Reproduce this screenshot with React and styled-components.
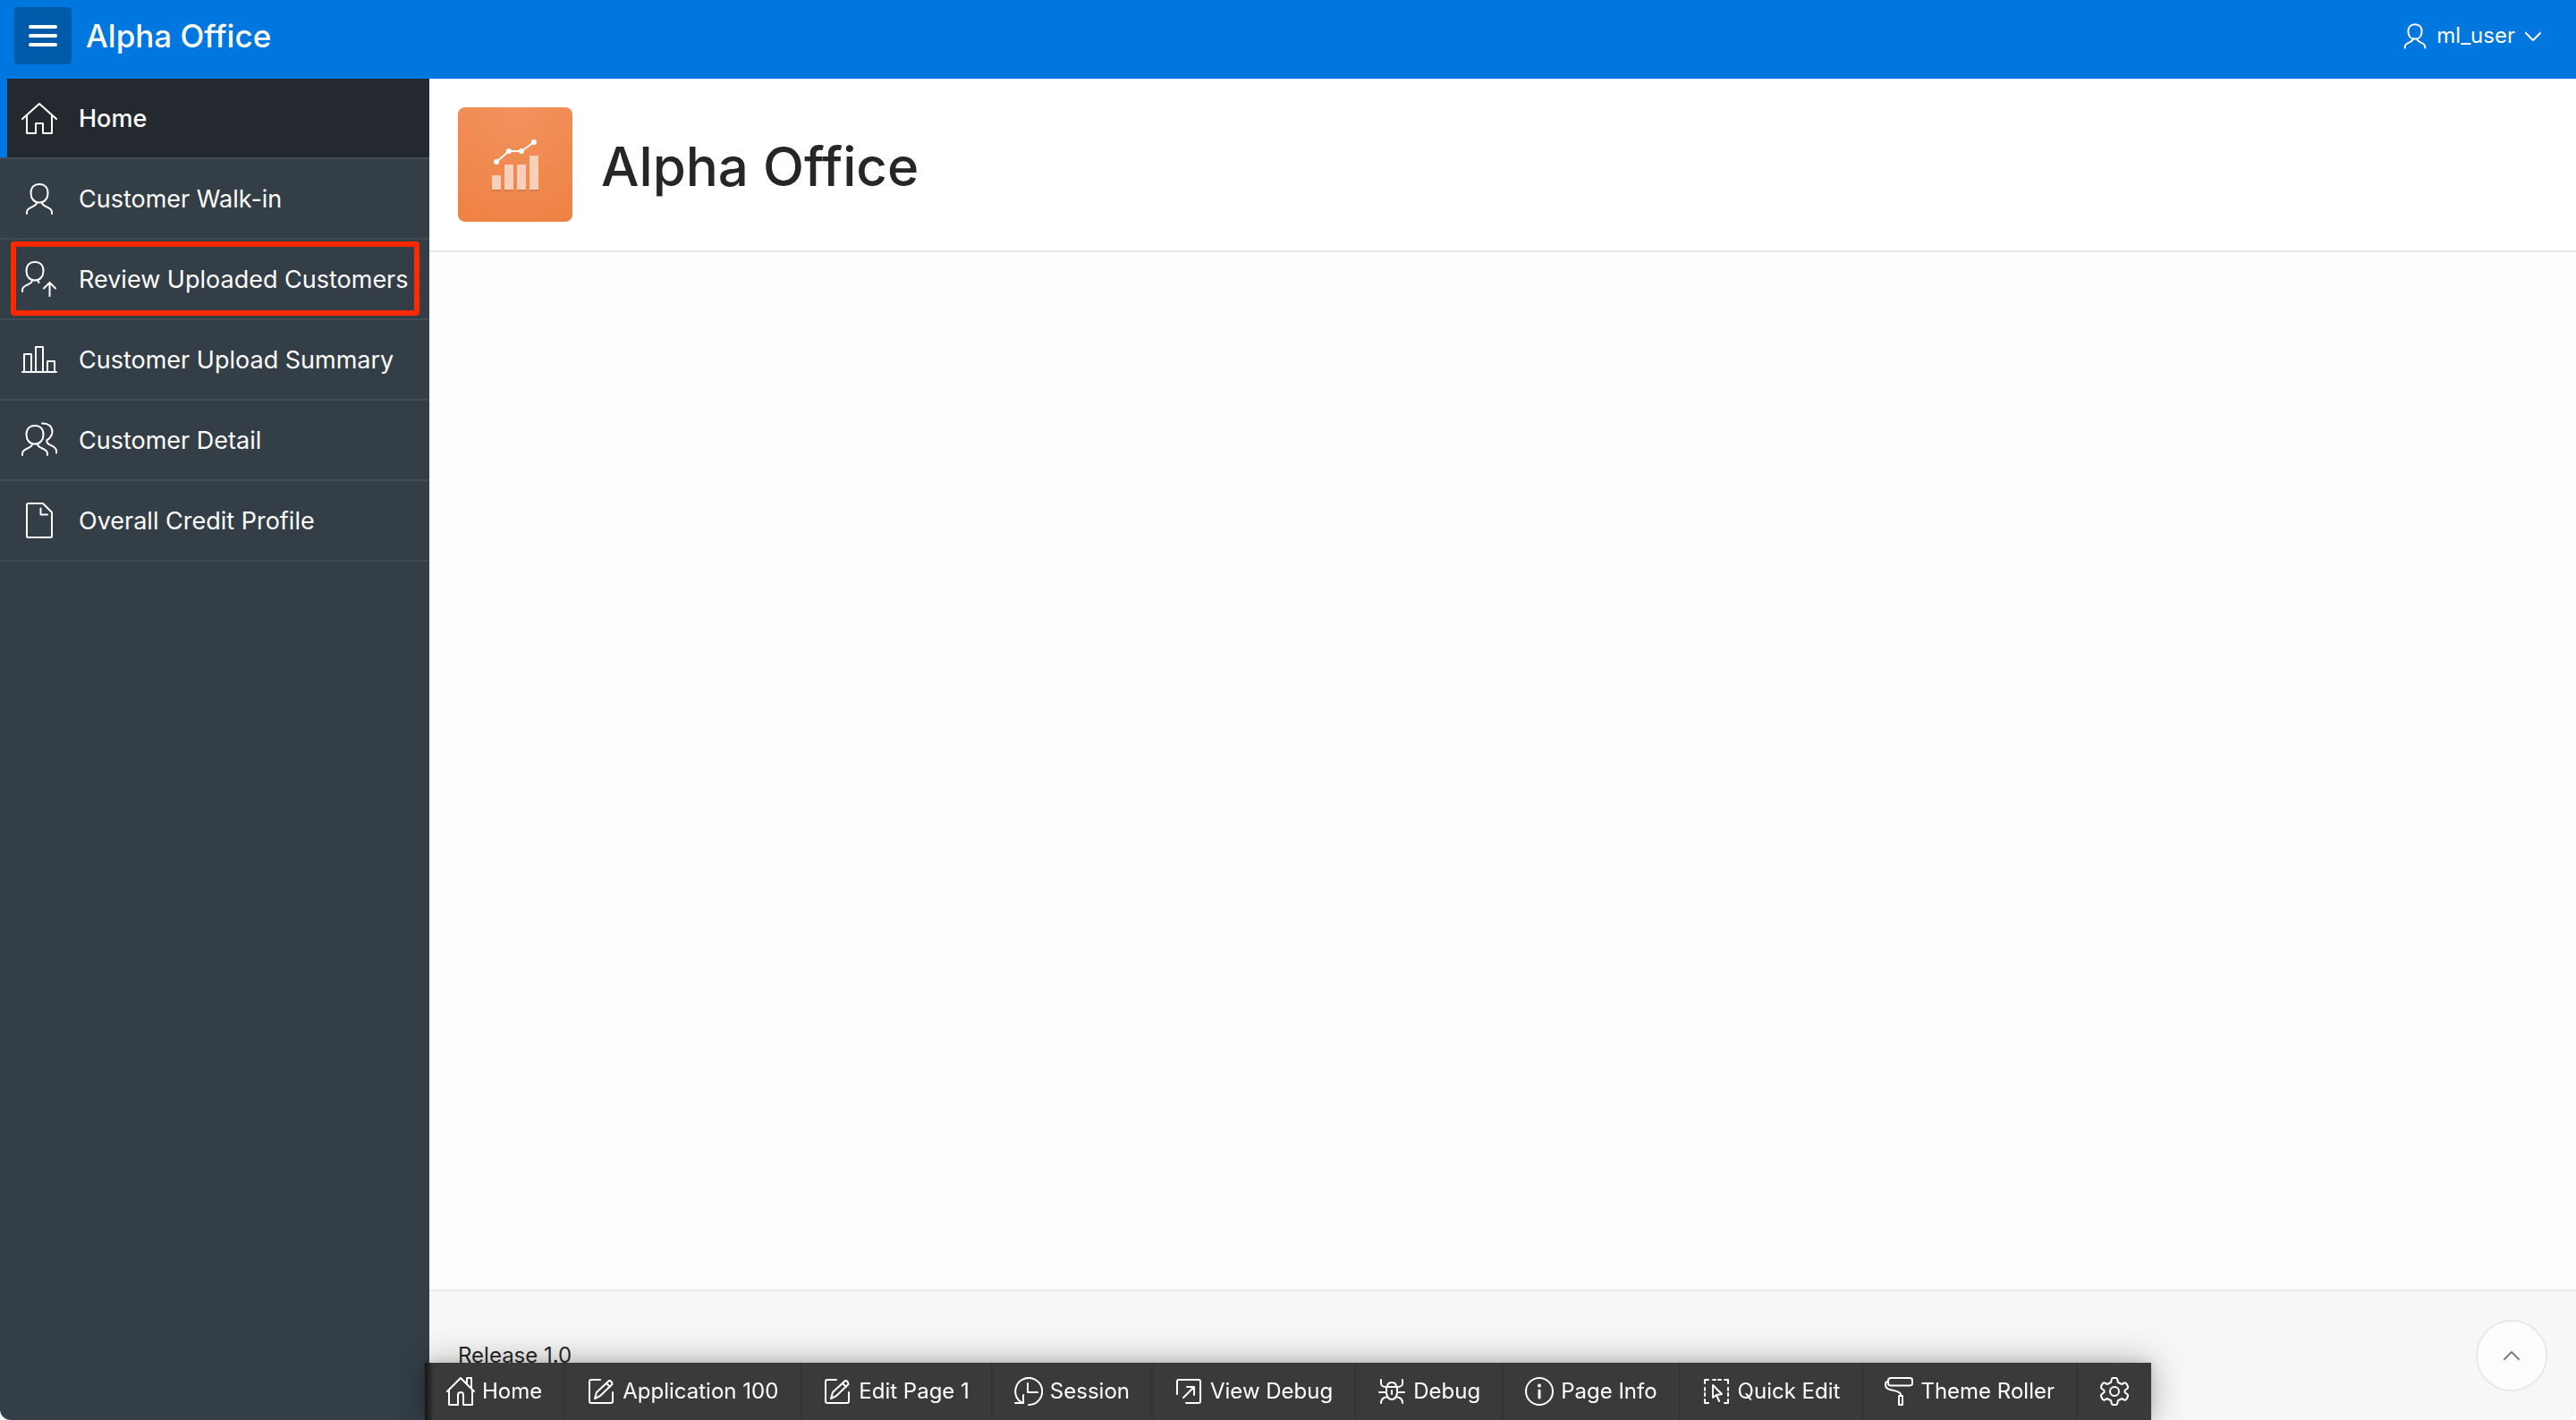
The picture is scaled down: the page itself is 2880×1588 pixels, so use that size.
import React from "react";
import styled, { createGlobalStyle, css } from "styled-components";

const GlobalStyle = createGlobalStyle`
  *, *::before, *::after { box-sizing: border-box; }
  body {
    margin: 0;
    background: #ffffff;
    color: #262626;
    font-family: Inter, "Liberation Sans", sans-serif;
    font-size: 28px;
    -webkit-font-smoothing: antialiased;
  }
`;

const Page = styled.div`
  min-height: 100vh;
  display: flex;
  flex-direction: column;
  border-radius: 0 0 12px 12px;
  overflow: hidden;
`;

const Header = styled.header`
  display: flex;
  align-items: center;
  height: 88px;
  padding: 0 32px 8px 16px;
  background: #0076df;
  color: #ffffff;
`;

const MenuToggle = styled.button`
  display: grid;
  place-items: center;
  width: 64px;
  height: 64px;
  padding: 0;
  border: 0;
  border-radius: 4px;
  background: #0059a9;
  color: inherit;
`;

const Brand = styled.a`
  margin-left: 16px;
  font-size: 35px;
  line-height: 48px;
  font-weight: 500;
  color: inherit;
  text-decoration: none;
`;

const UserMenu = styled.button`
  display: flex;
  align-items: center;
  gap: 8px;
  margin-left: auto;
  padding: 0;
  border: 0;
  background: none;
  color: inherit;
  font: inherit;
  font-size: 24px;
  line-height: 32px;
`;

const Body = styled.div`
  flex: 1;
  display: flex;
`;

const Sidebar = styled.nav`
  flex: none;
  width: 480px;
  background: #343e47;
`;

const NavList = styled.ul`
  margin: 0;
  padding: 0;
  list-style: none;
`;

const NavItem = styled.li`
  position: relative;
  border-bottom: 2px solid #414b54;
`;

const NavLink = styled.a`
  display: flex;
  align-items: center;
  gap: 24px;
  height: 88px;
  padding-left: 24px;
  color: #ffffff;
  font-size: 27px;
  line-height: 40px;
  white-space: nowrap;
  text-decoration: none;
  ${(p) =>
    p.$active &&
    css`
      padding-left: 16px;
      border-left: 8px solid #0076df;
      background: #23292f;
      font-weight: 500;
    `}
`;

const NavLabel = styled.span`
  padding-top: 2px;
`;

const Highlight = styled.span`
  position: absolute;
  inset: 2px 11px 3px 12px;
  border: 6px solid #ff2800;
  border-radius: 4px;
  pointer-events: none;
`;

const Main = styled.main`
  flex: 1;
  display: flex;
  flex-direction: column;
  background: #fdfdfd;
`;

const Hero = styled.section`
  display: flex;
  align-items: center;
  gap: 32px;
  padding: 32px;
  border-bottom: 2px solid #e6e6e6;
  background: #ffffff;
`;

const AppIcon = styled.div`
  display: grid;
  width: 128px;
  height: 128px;
  border-radius: 8px;
  background: radial-gradient(circle at 50% 0, #f2935f 0, #ee8143 100%);
`;

const Title = styled.h1`
  margin: 0;
  padding-top: 4px;
  font-size: 60px;
  line-height: 80px;
  font-weight: 500;
`;

const Footer = styled.footer`
  display: flex;
  align-items: center;
  justify-content: space-between;
  height: 146px;
  margin-top: auto;
  padding: 0 32px;
  border-top: 2px solid #e9e9e9;
  background: #f7f7f7;
  font-size: 24px;
  line-height: 32px;
`;

const TopButton = styled.button`
  display: grid;
  place-items: center;
  width: 80px;
  height: 80px;
  padding: 0;
  border: 2px solid #e9e9e9;
  border-radius: 50%;
  background: #fdfdfd;
  color: #7c7c7f;
`;

const Toolbar = styled.div`
  position: fixed;
  bottom: 0;
  left: 50%;
  transform: translateX(-50%);
  display: flex;
  height: 64px;
  background: linear-gradient(to right, #141414 0, #3a3a3a 10px);
  box-shadow: 0 0 40px rgba(0, 0, 0, 0.3), 0 0 12px rgba(0, 0, 0, 0.15);
`;

const Tool = styled.button`
  display: flex;
  align-items: center;
  gap: 8px;
  padding: 0 24px;
  border: 0;
  border-right: 2px solid #333333;
  background: none;
  color: #ffffff;
  font: inherit;
  font-size: 24px;
  line-height: 32px;
  white-space: nowrap;
  &:last-child {
    padding: 0 25px;
    border-right: 0;
  }
`;

const Svg = styled.svg`
  flex: none;
  display: block;
  fill: none;
  stroke: currentColor;
  stroke-width: ${(p) => p.$stroke || 2};
  stroke-linecap: round;
  stroke-linejoin: round;
`;

const icons = {
  home: <path d="M1 21 20 4 39 21M6 17V37H16V26H24V37H34V17" />,
  user: <path d="M20 4C26 4 29.500 8 29.500 14S26 24.500 20 24.500 10.500 20 10.500 14 14 4 20 4ZM17 24.500C17 30 6 29 6 35V37M23 24.500C23 30 34 29 34 35V37" />,
  userUp: <path d="M15 1C21 1 24.500 5 24.500 11S21 21.500 15 21.500 5.500 17 5.500 11 9 1 15 1ZM12 21.500C12 27 1 26 1 32V34M18 21.500 19.500 24M31.500 39V24M25 30.500 31.500 24 38 30.500" />,
  bars: <path d="M1 34H39M3 34V14H11V34M16 34V6H24V34M29 34V22H37V34" />,
  users: <path d="M15 4C21 4 24.500 8 24.500 14S21 24.500 15 24.500 5.500 20 5.500 14 9 4 15 4ZM12 24.500C12 30 1 29 1 35V37M18 24.500C18 30 29 29 29 35V37M23 1.500C30 1 34.500 5 34.500 11 34.500 15 31 19 28.500 20C26 26 39 26 39 32V34.500" />,
  file: <path d="M6 2.500Q6 1 7.500 1H24L34 11V37.500Q34 39 32.500 39H7.500Q6 39 6 37.500ZM21.500 6.500V13.500H29" />,
};

const toolIcons = {
  home: <path d="M1 16 16 1 31 16M3 14V31H13V20Q13 17 16 17T19 20V31H29V14M23 7V1H28V12" />,
  edit: <path d="M15 3H5Q3 3 3 5V27Q3 29 5 29H27Q29 29 29 27V17M9 24 11 17 25 4Q28 4 28.500 8L15 21ZM22 7 26 11" />,
  session: <path d="M16 31A15 15 0 1 0 5 26L9 29M10 20V29H1M15 7V17H26" />,
  view: <path d="M3 19V5Q3 3 5 3H27Q29 3 29 5V27Q29 29 27 29H13M10 23 22 11M14 11H22V20" />,
  debug: <path d="M10 11H22V18Q21 25 16 25T10 18ZM11 11Q11 6 16 6T21 11M16 15V19M2 17H10M22 17H30M4 3V8Q5 11 10 11M28 3V8Q27 11 22 11M4 29Q4 23 11 22M28 29Q28 23 21 22" />,
  info: (
    <>
      <circle cx="16" cy="16" r="15" />
      <path d="M16 15V23" strokeWidth="3" />
      <circle cx="16" cy="9.500" r="1" fill="currentColor" />
    </>
  ),
  quick: <path d="M3 7V3H7M12 3H15M18 3H21M25 3H29V7M29 12V15M29 18V21M29 25V29H25M3 12V15M3 18V21M3 25V29H7M12 9V23L16 20 19 27M12 9 22 19 16 20" />,
  roller: <path d="M7 1H28Q31 1 31 3.500V7Q31 9.500 28 9.500H7Q4 9.500 4 7V3.500Q4 1 7 1ZM4 5H3Q1 5 1 8 1 13 6 14 17 16 18 19V21M16 21H20V31H16Z" />,
  gear: (
    <>
      <path d="M14 1H18Q19 1 19.300 3L20 6Q22.500 7 24 8L27 6.500Q28.500 6 29.500 7.500L31 10.500Q31.500 12 30 13L27.500 15V17L30 19Q31.500 20 31 21.500L29.500 24.500Q28.500 26 27 25.500L24 24Q22.500 25.500 20 26L19.300 29Q19 31 18 31H14Q13 31 12.700 29L12 26Q9.500 25.500 8 24L5 25.500Q3.500 26 2.500 24.500L1 21.500Q.5 20 2 19L4.500 17V15L2 13Q.5 12 1 10.500L2.500 7.500Q3.500 6 5 6.500L8 8Q9.500 7 12 6L12.700 3Q13 1 14 1Z" />
      <circle cx="16" cy="16" r="5" />
    </>
  ),
};

const navigation = [
  { icon: "home", label: "Home", active: true },
  { icon: "user", label: "Customer Walk-in" },
  { icon: "userUp", label: "Review Uploaded Customers", highlighted: true },
  { icon: "bars", label: "Customer Upload Summary" },
  { icon: "users", label: "Customer Detail" },
  { icon: "file", label: "Overall Credit Profile" },
];

const tools = [
  { icon: "home", label: "Home" },
  { icon: "edit", label: "Application 100" },
  { icon: "edit", label: "Edit Page 1" },
  { icon: "session", label: "Session" },
  { icon: "view", label: "View Debug" },
  { icon: "debug", label: "Debug" },
  { icon: "info", label: "Page Info" },
  { icon: "quick", label: "Quick Edit" },
  { icon: "roller", label: "Theme Roller" },
];

export default function App() {
  return (
    <Page>
      <GlobalStyle />
      <Header>
        <MenuToggle aria-label="Main navigation">
          <Svg width="32" height="24" viewBox="0 0 32 24" $stroke={4}>
            <path d="M2 2H30M2 12H30M2 22H30" />
          </Svg>
        </MenuToggle>
        <Brand href="#">Alpha Office</Brand>
        <UserMenu>
          <Svg width="32" height="32" viewBox="0 0 40 40" $stroke={2.5}>{icons.user}</Svg>
          ml_user
          <Svg width="28" height="32" viewBox="4 0 28 32"><path d="M8 13 16 21 24 13" /></Svg>
        </UserMenu>
      </Header>
      <Body>
        <Sidebar aria-label="Main">
          <NavList>
            {navigation.map((item) => (
              <NavItem key={item.label}>
                <NavLink href="#" $active={item.active}>
                  <Svg width="40" height="40" viewBox="0 0 40 40">{icons[item.icon]}</Svg>
                  <NavLabel>{item.label}</NavLabel>
                </NavLink>
                {item.highlighted && <Highlight />}
              </NavItem>
            ))}
          </NavList>
        </Sidebar>
        <Main>
          <Hero>
            <AppIcon>
              <Svg width="128" height="128" viewBox="0 0 128 128">
                <path d="M38 93H48M52 93H62M66 93H76M80 93H90" stroke="#d67a46" strokeLinecap="butt" />
                <path d="M38 76H48V92H38ZM52 64H62V92H52ZM66 64H76V92H66ZM80 54H90V92H80Z" fill="#f9cfb9" stroke="none" />
                <path d="M43 61 57 49H71L85 39" stroke="#ffffff" />
                <g fill="#ffffff" stroke="none">
                  <circle cx="43" cy="61" r="3" />
                  <circle cx="57" cy="49" r="3" />
                  <circle cx="71" cy="49" r="3" />
                  <circle cx="85" cy="39" r="3" />
                </g>
              </Svg>
            </AppIcon>
            <Title>Alpha Office</Title>
          </Hero>
          <Footer>
            <span>Release 1.0</span>
            <TopButton aria-label="Back to top">
              <Svg width="32" height="32" viewBox="0 0 32 32"><path d="M8 20 16 12 24 20" /></Svg>
            </TopButton>
          </Footer>
        </Main>
      </Body>
      <Toolbar role="toolbar" aria-label="Developer toolbar">
        {tools.map((tool) => (
          <Tool key={tool.label}>
            <Svg width="32" height="32" viewBox="0 0 32 32">{toolIcons[tool.icon]}</Svg>
            {tool.label}
          </Tool>
        ))}
        <Tool aria-label="Options">
          <Svg width="32" height="32" viewBox="0 0 32 32">{toolIcons.gear}</Svg>
        </Tool>
      </Toolbar>
    </Page>
  );
}
